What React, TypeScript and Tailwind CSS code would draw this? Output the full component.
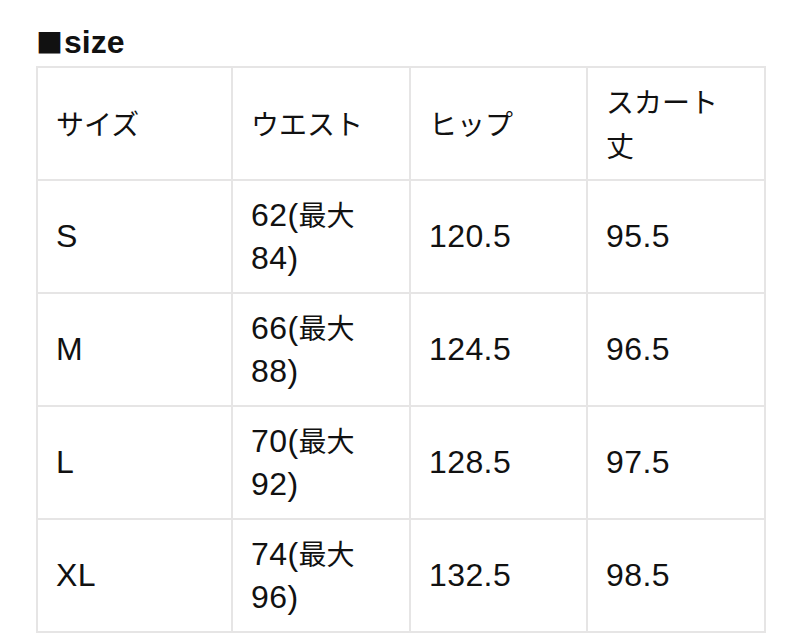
import React from "react";

const J = ({ children }: { children: React.ReactNode }) => (
  <span className="text-[28px] tracking-normal" style={{ fontFamily: '"Noto Sans CJK JP", sans-serif' }}>
    {children}
  </span>
);

const rows: [string, string, string, string, string][] = [
  ["S", "62(", "84)", "120.5", "95.5"],
  ["M", "66(", "88)", "124.5", "96.5"],
  ["L", "70(", "92)", "128.5", "97.5"],
  ["XL", "74(", "96)", "132.5", "98.5"],
];

export default function App() {
  const cell =
    "border-2 border-[#e6e5e5] align-middle text-left pl-[18px] pr-[26px] h-[113px] font-normal leading-[43px] text-[32px] tracking-[0.4px]";
  return (
    <div
      className="w-[800px] h-[635px] bg-white text-[#111] overflow-hidden"
      style={{ fontFamily: '"Liberation Sans", "Noto Sans CJK JP", sans-serif' }}
    >
      <div className="pl-[36px] pt-[20px] pb-[7px] h-[66px] text-[32px] font-bold leading-[34px] flex items-end">
        <span className="text-[27px] mr-[1px]" style={{ fontFamily: '"Noto Sans CJK JP", sans-serif' }}>■</span>
        <span>size</span>
      </div>
      <table className="ml-[36px] table-fixed border-collapse">
        <colgroup>
          <col className="w-[195px]" />
          <col className="w-[178px]" />
          <col className="w-[177px]" />
          <col className="w-[178px]" />
        </colgroup>
        <thead>
          <tr>
            <th className={cell}><J>サイズ</J></th>
            <th className={cell}><J>ウエスト</J></th>
            <th className={cell}><J>ヒップ</J></th>
            <th className={cell}><J>スカート丈</J></th>
          </tr>
        </thead>
        <tbody>
          {rows.map((r) => (
            <tr key={r[0]}>
              <td className={cell}>{r[0]}</td>
              <td className={cell}>
                {r[1]}
                <J>最大</J>
                {r[2]}
              </td>
              <td className={cell}>{r[3]}</td>
              <td className={cell}>{r[4]}</td>
            </tr>
          ))}
        </tbody>
      </table>
    </div>
  );
}
